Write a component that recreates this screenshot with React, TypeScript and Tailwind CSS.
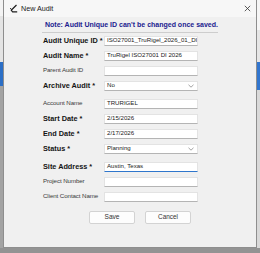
import React from 'react';

type Field = {
  label: string;
  bold?: boolean;
  value?: string;
  kind?: 'input' | 'select';
  focused?: boolean;
  gapBefore?: boolean;
};

const fields: Field[] = [
  { label: 'Audit Unique ID *', bold: true, value: 'ISO27001_TruRigel_2026_01_DI' },
  { label: 'Audit Name *', bold: true, value: 'TruRigel ISO27001 DI 2026' },
  { label: 'Parent Audit ID' },
  { label: 'Archive Audit *', bold: true, value: 'No', kind: 'select' },
  { label: 'Account Name', value: 'TRURIGEL', gapBefore: true },
  { label: 'Start Date *', bold: true, value: '2/15/2026' },
  { label: 'End Date *', bold: true, value: '2/17/2026' },
  { label: 'Status *', bold: true, value: 'Planning', kind: 'select' },
  { label: 'Site Address *', bold: true, value: 'Austin, Texas', focused: true, gapBefore: true },
  { label: 'Project Number' },
  { label: 'Client Contact Name' },
];

const Chevron = () => (
  <svg width="6" height="4" viewBox="0 0 6 4" className="shrink-0">
    <path d="M0.5 0.8 L3 3.2 L5.5 0.8" fill="none" stroke="#8a8a8a" strokeWidth="0.8" />
  </svg>
);

const FormRow: React.FC<{ field: Field }> = ({ field }) => (
  <div className={`flex items-center h-[15px] ${field.gapBefore ? 'mt-[3px]' : ''}`}>
    <span
      className={`w-[61px] shrink-0 whitespace-nowrap leading-none ${
        field.bold ? 'text-[7.3px] font-bold text-[#151515]' : 'text-[6.2px] text-[#3a3a3a] tracking-[-0.1px]'
      }`}
    >
      {field.label}
    </span>
    <div
      className={`w-[94px] h-[10px] flex items-center justify-between pl-[2px] pr-[3px] bg-white border border-[#e3e3e3] overflow-hidden ${
        field.focused ? 'border-b-[1.5px] border-b-[#2f76cc]' : 'border-b-[#b4b4b4]'
      }`}
    >
      <span className="text-[6.1px] leading-none text-[#222] whitespace-nowrap">{field.value ?? ''}</span>
      {field.kind === 'select' && <Chevron />}
    </div>
  </div>
);

export default function App() {
  return (
    <div className="w-[260px] h-[253px] flex flex-col bg-[#9c9c9c] overflow-hidden font-['Liberation_Sans',Arial,sans-serif]">
      <div className="flex h-[248px]">
        {/* window behind, left edge */}
        <div className="w-[3px] flex flex-col">
          <div className="h-[16px] bg-[#f3f3f3]" />
          <div className="h-[46px] bg-[#e4e4e4]" />
          <div className="h-[24px] bg-[#2c6fc6]" />
          <div className="flex-1 bg-[#a3a3a3]" />
        </div>

        {/* dialog */}
        <div className="w-[254px] flex flex-col bg-[#f0f0f0] border-x border-b border-[#8e8e8e]">
          <div className="h-[17px] shrink-0 flex items-center bg-[#f7f7f7] pl-[5px] pr-[4px]">
            <svg width="9" height="9" viewBox="0 0 9 9">
              <path d="M7.5 1 L2.2 6.2 L3.6 7.8 L8.2 7.8" fill="none" stroke="#1e1e1e" strokeWidth="1.2" strokeLinejoin="round" />
              <path d="M1 4.2 L2.6 5.4" stroke="#1e1e1e" strokeWidth="0.9" />
            </svg>
            <span className="ml-[3px] text-[7.2px] leading-none text-[#1a1a1a]">New Audit</span>
            <svg width="7" height="7" viewBox="0 0 7 7" className="ml-auto mr-[1px]">
              <path d="M0.8 0.8 L6.2 6.2 M6.2 0.8 L0.8 6.2" stroke="#333" strokeWidth="0.8" />
            </svg>
          </div>

          <div className="ml-[38px] w-[176px] h-[16px] shrink-0 flex items-center pl-[3px] border-b border-[#cdcdcd]">
            <span className="text-[7px] font-bold leading-none text-[#1b1b8f] whitespace-nowrap">
              Note: Audit Unique ID can't be changed once saved.
            </span>
          </div>

          <div className="pl-[39px] flex flex-col">
            {fields.map((f) => (
              <FormRow key={f.label} field={f} />
            ))}
          </div>

          <div className="flex gap-[10px] mt-[7px] pl-[85px]">
            <button className="w-[46px] h-[13px] bg-[#fdfdfd] border border-[#d3d3d3] rounded-[2px] text-[6.6px] leading-none text-[#333]">
              Save
            </button>
            <button className="w-[46px] h-[13px] bg-[#fdfdfd] border border-[#d3d3d3] rounded-[2px] text-[6.4px] leading-none text-[#333]">
              Cancel
            </button>
          </div>
        </div>

        {/* window behind, right edge */}
        <div className="w-[3px] flex flex-col">
          <div className="h-[30px] bg-[#f6f6f6]" />
          <div className="h-[32px] bg-[#e6e6e6]" />
          <div className="h-[28px] bg-[#3276cf]" />
          <div className="flex-1 bg-[#d9d9d9]" />
        </div>
      </div>
      <div className="h-[5px] bg-[#939393]" />
    </div>
  );
}
